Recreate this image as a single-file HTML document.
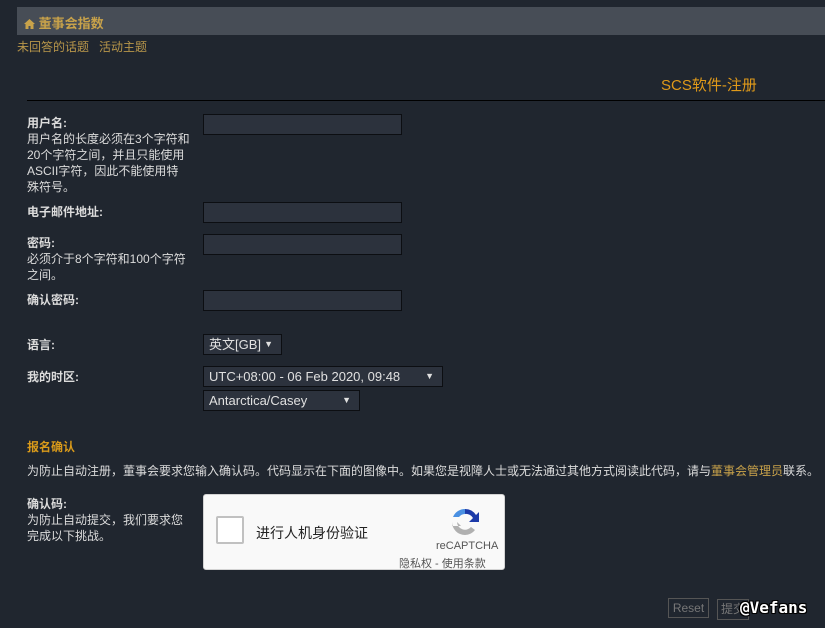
<!DOCTYPE html>
<html><head><meta charset="utf-8"><style>
body{margin:0;width:825px;height:628px;background:#20262f;font-family:"Liberation Sans","Noto Sans CJK SC",sans-serif;font-size:12px;color:#dcdcdc;position:relative;overflow:hidden}
.a{position:absolute;white-space:nowrap}
.hdr{position:absolute;left:17px;top:7px;width:808px;height:28px;background:#474d56}
.in{position:absolute;background:#2c323d;border:1px solid #0c0e12;box-sizing:border-box}
.sel{position:absolute;background:#2c323d;border:1px solid #0c0e12;box-sizing:border-box;font-size:13px;color:#e0e0e0;padding-left:5px;line-height:19px}
.sel:after{content:"▼";position:absolute;right:8px;top:0;font-size:9px;line-height:19px}
b{font-weight:bold}
.lh{line-height:16px}
</style></head><body>
<div class="hdr"></div>
<div class="a" style="left:24px;top:13px;color:#c8a24a;font-weight:bold;font-size:13px">
<svg width="11" height="10" viewBox="0 0 11 10" style="vertical-align:-1px"><path d="M5.5 0L0 5h1.5v5h3V7h2v3h3V5H11z" fill="#c8a24a"/></svg> 董事会指数</div>
<div class="a" style="left:17px;top:38px;color:#b8964a">未回答的话题 &nbsp; 活动主题</div>
<div class="a" style="left:661px;top:74px;color:#e09a1a;font-size:15px">SCS软件-注册</div>
<div class="a" style="left:27px;top:100px;width:798px;height:1px;background:#000"></div>

<div class="a lh" style="left:27px;top:115px"><b>用户名:</b><br>用户名的长度必须在3个字符和<br>20个字符之间，并且只能使用<br>ASCII字符，因此不能使用特<br>殊符号。</div>
<div class="in" style="left:203px;top:114px;width:199px;height:21px"></div>
<div class="a" style="left:27px;top:203px"><b>电子邮件地址:</b></div>
<div class="in" style="left:203px;top:202px;width:199px;height:21px"></div>
<div class="a lh" style="left:27px;top:235px"><b>密码:</b><br>必须介于8个字符和100个字符<br>之间。</div>
<div class="in" style="left:203px;top:234px;width:199px;height:21px"></div>
<div class="a" style="left:27px;top:291px"><b>确认密码:</b></div>
<div class="in" style="left:203px;top:290px;width:199px;height:21px"></div>

<div class="a" style="left:27px;top:336px"><b>语言:</b></div>
<div class="sel" style="left:203px;top:334px;width:79px;height:21px">英文[GB]</div>
<div class="a" style="left:27px;top:368px"><b>我的时区:</b></div>
<div class="sel" style="left:203px;top:366px;width:240px;height:21px">UTC+08:00 - 06 Feb 2020, 09:48</div>
<div class="sel" style="left:203px;top:390px;width:157px;height:21px">Antarctica/Casey</div>

<div class="a" style="left:27px;top:438px;color:#d99a1a"><b>报名确认</b></div>
<div class="a" style="left:27px;top:462px">为防止自动注册，董事会要求您输入确认码。代码显示在下面的图像中。如果您是视障人士或无法通过其他方式阅读此代码，请与<span style="color:#c8a24a">董事会管理员</span>联系。</div>
<div class="a lh" style="left:27px;top:496px"><b>确认码:</b><br>为防止自动提交，我们要求您<br>完成以下挑战。</div>

<div class="a" style="left:203px;top:494px;width:302px;height:76px;background:#f9f9f9;border:1px solid #d3d3d3;box-sizing:border-box;border-radius:3px">
<div class="a" style="left:12px;top:21px;width:28px;height:28px;background:#fff;border:2px solid #c1c1c1;box-sizing:border-box;border-radius:2px"></div>
<div class="a" style="left:52px;top:28px;color:#222;font-size:14px">进行人机身份验证</div>
<svg class="a" style="left:245px;top:11px" width="32" height="32" viewBox="0 0 32 32"><path d="M16 3a13 13 0 0 1 11 6l3-3v10H20l4-4a8 8 0 0 0-8-4z" fill="#1c3aa9"/><path d="M16 3a13 13 0 0 0-12 8h6a8 8 0 0 1 6-3z" fill="#4a90e2"/><path d="M3 16a13 13 0 0 0 13 13 13 13 0 0 0 10-5l-4-3a8 8 0 0 1-14-5l4 4H3z" fill="#b0b0b0"/></svg>
<div class="a" style="left:232px;top:45px;color:#555;font-size:11px">reCAPTCHA</div>
<div class="a" style="left:195px;top:60px;color:#555;font-size:11px">隐私权 - 使用条款</div>
</div>

<div class="a" style="left:668px;top:598px;width:41px;height:20px;border:1px solid #555;box-sizing:border-box;color:#777;font-size:12px;text-align:center;line-height:18px">Reset</div>
<div class="a" style="left:717px;top:599px;width:32px;height:21px;border:1px solid #555;box-sizing:border-box;color:#777;font-size:12px;padding-left:3px;line-height:19px">提交</div>
<div class="a" style="left:740px;top:598px;color:#fff;font-size:16px;font-weight:bold;font-family:'DejaVu Sans Mono',monospace;text-shadow:1px 1px 0 #000,-1px -1px 0 #000,1px -1px 0 #000,-1px 1px 0 #000">@Vefans</div>
</body></html>
